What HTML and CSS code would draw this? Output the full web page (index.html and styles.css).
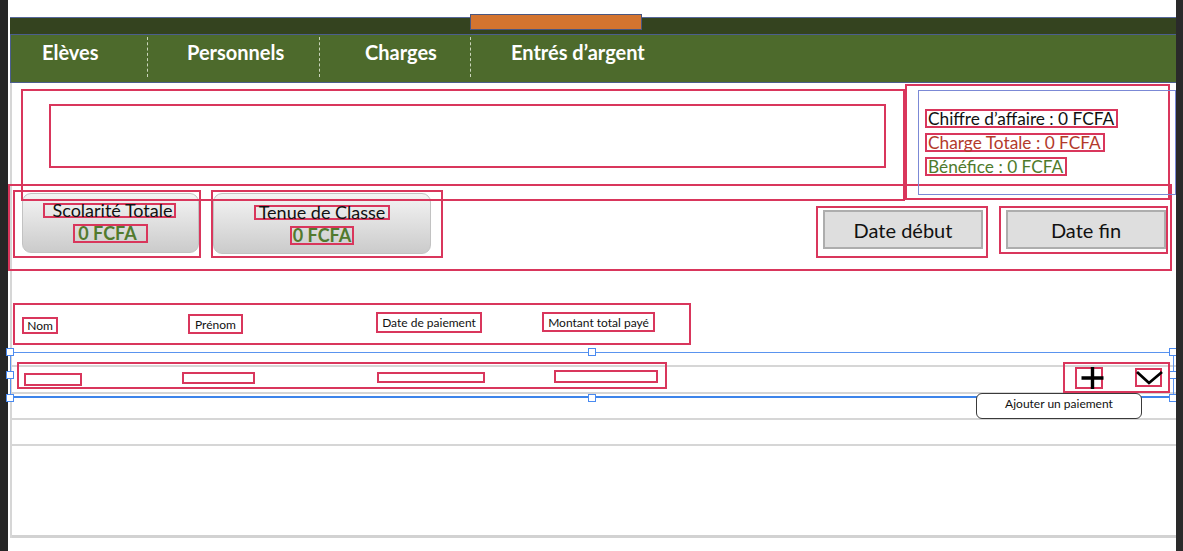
FILE: index.html
```html
<!DOCTYPE html>
<html lang="fr">
<head>
<meta charset="utf-8">
<title>Entrés d'argent</title>
<link rel="stylesheet" href="styles.css">
</head>
<body>
<div class="screen">
  <div class="edge-left"></div>
  <div class="gutter"></div>
  <div class="frame">
    <div class="topgap"></div>
    <div class="darkbar"></div>
    <div class="tab"></div>
    <nav class="nav">
      <div class="nav-item ni-1">Elèves</div>
      <div class="nav-item ni-2">Personnels</div>
      <div class="nav-item ni-3">Charges</div>
      <div class="nav-item ni-4">Entrés d’argent</div>
    </nav>
    <main class="content">
      <section class="top">
        <div class="search-box"><div class="search-field"></div></div>
        <div class="summary">
          <div class="summary-sel"></div>
          <p class="sum sum-black">Chiffre d’affaire : 0 FCFA</p>
          <p class="sum sum-red">Charge Totale : 0 FCFA</p>
          <p class="sum sum-green">Bénéfice : 0 FCFA</p>
        </div>
      </section>
      <section class="filters">
        <div class="card-frame cf-1">
          <div class="card">
            <span class="card-title ct-1">Scolarité Totale</span>
            <span class="card-value cv-1">0 FCFA</span>
          </div>
        </div>
        <div class="card-frame cf-2">
          <div class="card">
            <span class="card-title ct-2">Tenue de Classe</span>
            <span class="card-value cv-2">0 FCFA</span>
          </div>
        </div>
        <div class="date-frame df-1"><div class="date-btn">Date début</div></div>
        <div class="date-frame df-2"><div class="date-btn">Date fin</div></div>
      </section>
      <div class="thead">
        <span class="th th-nom">Nom</span>
        <span class="th th-prenom">Prénom</span>
        <span class="th th-date">Date de paiement</span>
        <span class="th th-montant">Montant total payé</span>
      </div>
      <div class="rows">
        <div class="row-gap"></div>
        <div class="row r1">
          <div class="data-box">
            <span class="cell c1"></span>
            <span class="cell c2"></span>
            <span class="cell c3"></span>
            <span class="cell c4"></span>
          </div>
          <div class="icons">
            <span class="ic ic-plus">
              <svg class="ic-svg" width="28" height="22" viewBox="0 0 28 22"><path d="M17.5 0 V22 M6.5 11 H28.5" stroke="#000" stroke-width="3.4" fill="none"/></svg>
            </span>
            <span class="ic ic-chev">
              <svg class="ic-svg" width="27" height="19" viewBox="0 0 27 19"><path d="M2 4 L14 15 L27 4" stroke="#000" stroke-width="2.8" fill="none" stroke-linejoin="miter"/></svg>
            </span>
          </div>
        </div>
        <div class="row r2"></div>
        <div class="row r3"></div>
        <div class="row r4"></div>
        <div class="selection">
          <span class="handle h1"></span>
          <span class="handle h2"></span>
          <span class="handle h3"></span>
          <span class="handle h4"></span>
          <span class="handle h5"></span>
          <span class="handle h6"></span>
          <span class="handle h7"></span>
          <span class="handle h8"></span>
        </div>
        <button class="add-btn">Ajouter un paiement</button>
      </div>
    </main>
  </div>
  <div class="edge-right"></div>
</div>
</body>
</html>
```
FILE: styles.css
```css
* { box-sizing: border-box; }
html, body { margin: 0; padding: 0; }
body {
  background: #fff;
  font-family: Lato, "Open Sans", "Liberation Sans", sans-serif;
  color: #111;
  width: 1183px;
  height: 551px;
  overflow: hidden;
}
:root { --red: #d9365c; }

.screen { display: flex; height: 551px; }
.edge-left { width: 8px; flex: none; background: #262626; }
.gutter { width: 2px; flex: none; }
.edge-right { width: 7px; flex: none; background: #2a2a2a; position: relative; z-index: 5; }
.frame { width: 1166px; flex: none; position: relative; }

.topgap { height: 17px; }
.darkbar { height: 17px; background: #34431f; border-top: 1px solid #56689a; }
.tab {
  position: absolute; left: 460px; top: 14px;
  width: 172px; height: 16px;
  background: #d4742f; border: 1px solid #4a5680;
}

.nav {
  height: 49px; background: #4d6a2c;
  border-top: 1px solid #4b5e8e; border-bottom: 1px solid #4b5e8e; border-left: 1px solid #4b5e8e;
  display: flex; align-items: flex-start;
}
.nav-item {
  height: 40px; margin-top: 2px; padding-top: 3px;
  color: #fff; font-weight: 700; font-size: 20px; line-height: 1.2;
  flex: none; white-space: nowrap;
}
.nav-item + .nav-item { border-left: 1px dashed rgba(235, 240, 225, 0.8); }
.ni-1 { width: 136px; padding-left: 31px; }
.ni-2 { width: 172px; padding-left: 39px; }
.ni-3 { width: 151px; padding-left: 45px; }
.ni-4 { flex: 1; padding-left: 40px; }

.content { border-left: 2px solid #d6d6d6; position: relative; height: 455px; }

.top { display: flex; align-items: flex-start; height: 101px; }
.search-box {
  flex: none; margin: 6px 0 0 9px; width: 884px; height: 112px;
  border: 2px solid var(--red); padding: 13px 0 0 26px;
  position: relative; z-index: 2;
}
.search-field { width: 837px; height: 64px; border: 2px solid var(--red); }
.summary {
  flex: none; margin-top: 1px; width: 265px; height: 116px;
  border: 2px solid var(--red); padding: 23px 0 0 18px;
  position: relative; z-index: 2;
}
.summary-sel {
  position: absolute; left: 11px; top: 4px; width: 258px; height: 105px;
  border: 1px solid #7b89d6;
}
.sum {
  margin: 0 0 5px 0; width: fit-content; height: 19px;
  border: 2px solid var(--red); padding: 0 2px 0 1px;
  font-size: 17.3px; line-height: 15px; white-space: nowrap;
}
.sum-black { color: #111; }
.sum-red { color: #b33a2b; }
.sum-green { color: #4f7a2b; }

.filters {
  display: flex; align-items: flex-start;
  margin-left: -4px; width: 1164px; height: 87px;
  border: 2px solid var(--red); padding: 4px 2px 0 3px;
}
.card-frame { flex: none; height: 68px; border: 2px solid var(--red); }
.cf-1 { width: 188px; padding: 1px 0 0 7px; }
.cf-2 { width: 232px; margin-left: 10px; padding-top: 1px; }
.card {
  display: flex; flex-direction: column; align-items: center;
  border: 1px solid #c2c2c2; border-radius: 9px;
  background: linear-gradient(#f4f4f4, #cbcbcb);
}
.cf-1 .card { width: 177px; height: 60px; padding-top: 9px; }
.cf-2 .card { width: 218px; height: 61px; padding-top: 11px; }
.card-title {
  border: 2px solid var(--red); height: 15px;
  font-size: 18px; line-height: 11px; color: #111; white-space: nowrap;
}
.ct-1 { padding: 0 1px 0 7px; margin-left: -2px; }
.ct-2 { padding: 0 3px 0 3px; }
.card-value {
  margin-top: 6px; height: 19px; border: 2px solid var(--red);
  font-size: 18px; font-weight: 700; line-height: 15px; color: #527a2e; white-space: nowrap;
}
.cv-1 { padding: 0 9px 0 3px; }
.cv-2 { padding: 0 1px; }

.date-frame { flex: none; border: 2px solid var(--red); padding: 2px 0 0 5px; margin-top: 16px; }
.df-1 { width: 172px; height: 52px; margin-left: auto; }
.df-2 { width: 169px; height: 48px; margin-left: 11px; }
.date-btn {
  width: 160px; height: 39px; background: #dedede; border: 2px solid #adadad;
  display: flex; align-items: center; justify-content: center;
  font-size: 20px; color: #111;
}

.thead {
  margin: 32px 0 0 1px; width: 678px; height: 42px;
  border: 2px solid var(--red); display: flex; align-items: flex-start;
}
.th {
  flex: none; border: 2px solid var(--red);
  display: flex; align-items: center; justify-content: center;
  font-size: 12px; color: #111; white-space: nowrap;
}
.th-nom { width: 36px; height: 17px; margin: 12px 0 0 7px; }
.th-prenom { width: 55px; height: 20px; margin: 9px 0 0 130px; }
.th-date { width: 106px; height: 21px; margin: 7px 0 0 133px; }
.th-montant { width: 113px; height: 20px; margin: 7px 0 0 60px; }

.rows { position: relative; }
.row-gap { height: 20px; }
.row { border-top: 2px solid #d6d6d6; display: flex; align-items: flex-start; }
.r1 { height: 27px; }
.r2 { height: 26px; }
.r3 { height: 26px; }
.r4 { height: 94px; border-bottom: 3px solid #d2d2d2; }

.data-box {
  flex: none; margin: -5px 0 0 5px; width: 650px; height: 27px;
  border: 2px solid var(--red); display: flex; align-items: flex-start;
  position: relative; z-index: 1;
}
.cell { flex: none; border: 2px solid var(--red); }
.c1 { width: 58px; height: 13px; margin: 9px 0 0 5px; }
.c2 { width: 73px; height: 12px; margin: 8px 0 0 100px; }
.c3 { width: 108px; height: 11px; margin: 8px 0 0 122px; }
.c4 { width: 104px; height: 13px; margin: 6px 0 0 69px; }

.icons {
  flex: none; margin: -5px 6px 0 auto; width: 107px; height: 31px;
  border: 2px solid var(--red); display: flex; align-items: flex-start;
  position: relative; z-index: 1;
}
.ic { flex: none; border: 2px solid var(--red); position: relative; }
.ic-plus { width: 28px; height: 22px; margin: 3px 0 0 10px; }
.ic-chev { width: 27px; height: 19px; margin: 4px 0 0 32px; }
.ic-svg { position: absolute; left: -2px; top: -2px; overflow: visible; }

.selection {
  position: absolute; left: -2px; top: 7px; width: 1164px; height: 46px;
  border: 1px solid #5a94ef; border-bottom: 2px solid #3d84ea;
  pointer-events: none;
}
.handle {
  position: absolute; width: 8px; height: 8px;
  background: #fff; border: 1px solid #4a8af0;
}
.h1 { left: -5px; top: -5px; }
.h2 { left: -5px; top: 18px; }
.h3 { left: -5px; top: 41px; }
.h4 { left: 577px; top: -5px; }
.h5 { left: 577px; top: 41px; }
.h6 { left: 1158px; top: -5px; }
.h7 { left: 1158px; top: 18px; }
.h8 { left: 1158px; top: 41px; }

.add-btn {
  position: absolute; left: 964px; top: 48px; width: 166px; height: 26px;
  background: #fff; border: 1.5px solid #3a3a3a; border-radius: 6px;
  font-family: Lato, "Open Sans", sans-serif; font-size: 12px; color: #111;
  padding: 3px 0 0 0; line-height: 14px; text-align: center;
  display: flex; justify-content: center; align-items: flex-start;
  z-index: 3;
}
```
